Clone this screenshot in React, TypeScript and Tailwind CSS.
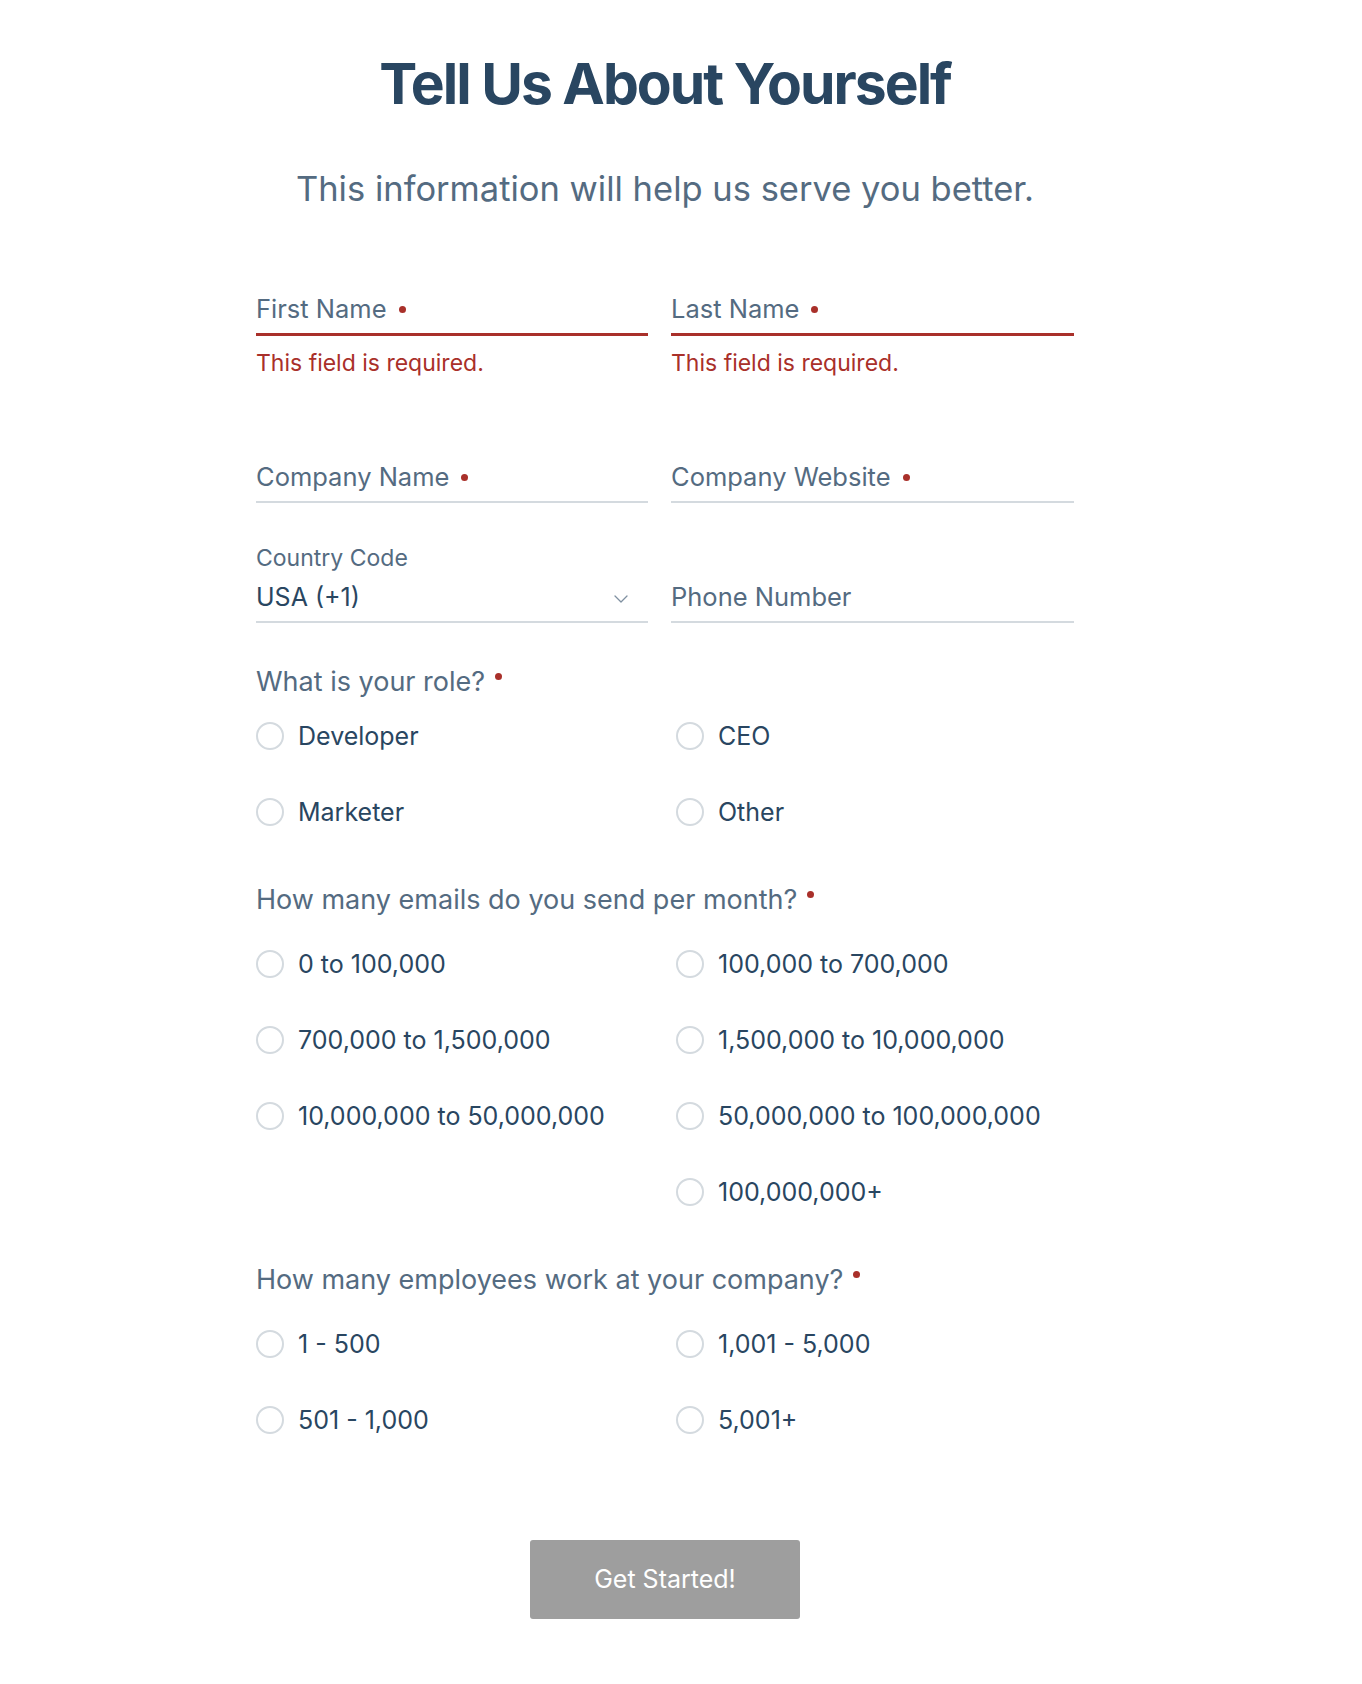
import React, { useState } from 'react';

type FieldProps = {
  label: string;
  required?: boolean;
  error?: string;
};

const RequiredDot = ({ raised }: { raised?: boolean }) => (
  <span
    className={`inline-block h-[7px] w-[7px] shrink-0 rounded-full bg-[#a9302a] ${raised ? 'ml-[10px] self-start mt-[7px]' : 'ml-[12px]'}`}
  />
);

const TextField: React.FC<FieldProps> = ({ label, required, error }) => {
  const [value, setValue] = useState('');
  return (
    <div>
      <label
        className={`relative flex items-center pb-[8px] ${error ? 'border-b-[3px] border-[#a9302a]' : 'border-b-2 border-[#d4dadf]'}`}
      >
        <span className={`flex items-center text-[25.5px] leading-[32px] text-[#546b81] ${value ? 'invisible' : ''}`}>
          {label}
          {required && <RequiredDot />}
        </span>
        <input
          value={value}
          onChange={(e) => setValue(e.target.value)}
          className="absolute inset-x-0 top-0 h-[32px] bg-transparent text-[25.5px] text-[#294661] outline-none"
        />
      </label>
      {error && <p className="mt-[13px] text-[23px] leading-[28px] text-[#a9302a]">{error}</p>}
    </div>
  );
};

const Radio = ({ name, label }: { name: string; label: string }) => (
  <label className="flex h-9 cursor-pointer items-center gap-[14px]">
    <input type="radio" name={name} className="peer sr-only" />
    <span className="h-[28px] w-[28px] shrink-0 rounded-full border-2 border-[#d4dadf] bg-white peer-checked:border-[8px] peer-checked:border-[#1a82e2]" />
    <span className="text-[25px] leading-[32px] text-[#294661]">{label}</span>
  </label>
);

const RadioGroup = ({
  name,
  question,
  columns,
  tight,
}: {
  name: string;
  question: string;
  columns: string[][];
  tight?: boolean;
}) => (
  <fieldset>
    <legend className="flex items-start text-[27px] leading-[32px] text-[#546b81]">
      {question}
      <RequiredDot raised />
    </legend>
    <div className={`grid grid-cols-[420px_1fr] ${tight ? 'mt-[20px]' : 'mt-[30px]'}`}>
      {columns.map((col, i) => (
        <div key={i} className="flex flex-col gap-[40px]">
          {col.map((opt) => (
            <Radio key={opt} name={name} label={opt} />
          ))}
        </div>
      ))}
    </div>
  </fieldset>
);

const App: React.FC = () => {
  return (
    <div className="min-h-screen bg-white pr-[32px] font-[Inter,sans-serif] antialiased">
      <div className="mx-auto w-[818px] pb-[60px] pt-[56px]">
        <h1 className="text-center text-[57px] font-bold leading-[56px] tracking-[-0.035em] text-[#294661]">
          Tell Us About Yourself
        </h1>
        <p className="mt-[57px] text-center text-[34.5px] leading-[40px] text-[#546b81]">
          This information will help us serve you better.
        </p>

        <form className="mt-[84px]" onSubmit={(e) => e.preventDefault()}>
          <div className="grid grid-cols-[392px_1fr] gap-x-[23px]">
            <TextField label="First Name" required error="This field is required." />
            <TextField label="Last Name" required error="This field is required." />
          </div>

          <div className="mt-[84px] grid grid-cols-[392px_1fr] gap-x-[23px]">
            <TextField label="Company Name" required />
            <TextField label="Company Website" required />
          </div>

          <div className="mt-[42px] grid grid-cols-[392px_1fr] items-end gap-x-[23px]">
            <div>
              <span className="block text-[23px] leading-[26px] text-[#546b81]">Country Code</span>
              <div className="mt-[10px] flex items-center justify-between border-b-2 border-[#d4dadf] pb-[8px] pr-[20px]">
                <span className="text-[25px] leading-[32px] text-[#294661]">USA (+1)</span>
                <svg width="14" height="8" viewBox="0 0 14 8" fill="none" className="mt-[4px]">
                  <path d="M1 1l6 6 6-6" stroke="#7f90a1" strokeWidth="1.3" strokeLinecap="round" strokeLinejoin="round" />
                </svg>
              </div>
            </div>
            <TextField label="Phone Number" />
          </div>

          <div className="mt-[43px]">
            <RadioGroup
              name="role"
              question="What is your role?"
              tight
              columns={[
                ['Developer', 'Marketer'],
                ['CEO', 'Other'],
              ]}
            />
          </div>

          <div className="mt-[54px]">
            <RadioGroup
              name="volume"
              question="How many emails do you send per month?"
              columns={[
                ['0 to 100,000', '700,000 to 1,500,000', '10,000,000 to 50,000,000'],
                ['100,000 to 700,000', '1,500,000 to 10,000,000', '50,000,000 to 100,000,000', '100,000,000+'],
              ]}
            />
          </div>

          <div className="mt-[54px]">
            <RadioGroup
              name="employees"
              question="How many employees work at your company?"
              columns={[
                ['1 - 500', '501 - 1,000'],
                ['1,001 - 5,000', '5,001+'],
              ]}
            />
          </div>

          <div className="mt-[102px] flex justify-center">
            <button
              type="submit"
              className="h-[79px] w-[270px] rounded-[3px] bg-[#9e9e9e] text-[25px] text-white"
            >
              Get Started!
            </button>
          </div>
        </form>
      </div>
    </div>
  );
};

export default App;
